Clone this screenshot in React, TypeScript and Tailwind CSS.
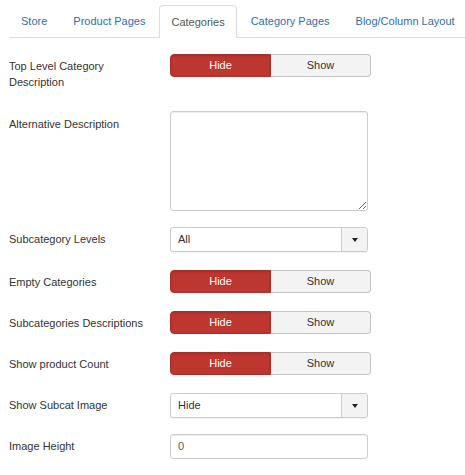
import { ReactNode } from 'react'

const tabs = ['Store', 'Product Pages', 'Categories', 'Category Pages', 'Blog/Column Layout']

function Toggle() {
  return (
    <div className="flex h-[23px] w-[201px] text-[11px]">
      <div className="flex w-[101px] items-center justify-center rounded-l-[4px] border border-[#a9302a] bg-[#bd362f] text-white shadow-[inset_0_1px_2px_rgba(0,0,0,0.15)]">
        Hide
      </div>
      <div className="flex flex-1 items-center justify-center rounded-r-[4px] border border-l-0 border-[#c4c4c4] bg-[#f3f3f3] text-[#333]">
        Show
      </div>
    </div>
  )
}

function SelectBox({ value }: { value: string }) {
  return (
    <div className="flex h-[25px] w-[198px] rounded-[3px] border border-[#ccc] bg-white text-[11px] text-[#333] shadow-[0_1px_1px_rgba(0,0,0,0.05)]">
      <div className="flex flex-1 items-center pl-[7px]">{value}</div>
      <div className="flex w-[26px] items-center justify-center rounded-r-[3px] border-l border-[#ccc] bg-[#f3f3f3]">
        <span className="block h-0 w-0 border-x-[3.5px] border-t-[4px] border-x-transparent border-t-[#222]" />
      </div>
    </div>
  )
}

function Row({ label, children, mb, pt = 'pt-[4px]' }: { label: ReactNode; children: ReactNode; mb: string; pt?: string }) {
  return (
    <div className={`flex items-start ${mb}`}>
      <div className={`w-[161px] shrink-0 text-[11px] leading-[16px] text-[#333] ${pt}`}>{label}</div>
      {children}
    </div>
  )
}

export default function App() {
  return (
    <div className="h-[475px] w-[465px] overflow-hidden bg-white pl-[9px] pt-[5px] font-['Liberation_Sans',Arial,sans-serif]">
      {/* Tabs */}
      <div className="flex h-[33px] border-b border-[#ddd]">
        {tabs.map((t) => (
          <div
            key={t}
            className={`mr-[2px] flex h-[33px] shrink-0 items-center whitespace-nowrap px-3 text-[11px] ${
              t === 'Categories'
                ? 'rounded-t-[4px] border border-b-0 border-[#ddd] bg-white px-[11px] text-[#555]'
                : 'text-[#2f6eae]'
            }`}
          >
            {t}
          </div>
        ))}
      </div>

      <div className="pt-[16px]">
        <Row label={<>Top Level Category<br />Description</>} mb="mb-[21px]">
          <Toggle />
        </Row>
        <Row label="Alternative Description" mb="mb-[16px]" pt="pt-[5px]">
          <textarea className="h-[100px] w-[198px] rounded-[3px] border border-[#ccc] bg-white shadow-[inset_0_1px_1px_rgba(0,0,0,0.075)] outline-none" />
        </Row>
        <Row label="Subcategory Levels" mb="mb-[18px]">
          <SelectBox value="All" />
        </Row>
        <Row label="Empty Categories" mb="mb-[18px]">
          <Toggle />
        </Row>
        <Row label="Subcategories Descriptions" mb="mb-[18px]">
          <Toggle />
        </Row>
        <Row label="Show product Count" mb="mb-[18px]">
          <Toggle />
        </Row>
        <Row label="Show Subcat Image" mb="mb-[16px]">
          <SelectBox value="Hide" />
        </Row>
        <Row label="Image Height" mb="mb-0">
          <div className="flex h-[25px] w-[198px] items-center rounded-[3px] border border-[#ccc] bg-white pl-[7px] text-[11px] text-[#555] shadow-[inset_0_1px_1px_rgba(0,0,0,0.075)]">
            0
          </div>
        </Row>
      </div>
    </div>
  )
}
